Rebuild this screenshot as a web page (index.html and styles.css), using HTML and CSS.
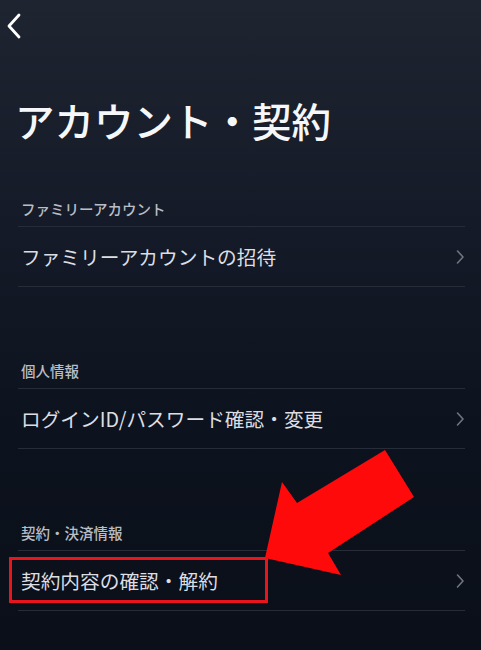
FILE: index.html
```html
<!DOCTYPE html>
<html lang="ja">
<head>
<meta charset="utf-8">
<title>アカウント・契約</title>
<link rel="stylesheet" href="styles.css">
</head>
<body>
<div class="page">
  <header class="topbar">
    <svg class="back" width="16" height="26" viewBox="0 0 16 26"><path d="M13 2 L3 13 L13 24" fill="none" stroke="#ffffff" stroke-width="2.8" stroke-linecap="round" stroke-linejoin="round"/></svg>
  </header>
  <h1 class="title">アカウント・契約</h1>

  <section class="group first">
    <h2 class="group-head">ファミリーアカウント</h2>
    <div class="row"><span class="row-label">ファミリーアカウントの招待</span><svg class="chev" width="10" height="16" viewBox="0 0 10 16"><path d="M2.5 2 L8 8 L2.5 14" fill="none" stroke="#70757e" stroke-width="1.6" stroke-linecap="round" stroke-linejoin="round"/></svg></div>
  </section>

  <section class="group">
    <h2 class="group-head">個人情報</h2>
    <div class="row"><span class="row-label">ログインID/パスワード確認・変更</span><svg class="chev" width="10" height="16" viewBox="0 0 10 16"><path d="M2.5 2 L8 8 L2.5 14" fill="none" stroke="#70757e" stroke-width="1.6" stroke-linecap="round" stroke-linejoin="round"/></svg></div>
  </section>

  <section class="group">
    <h2 class="group-head">契約・決済情報</h2>
    <div class="row"><span class="row-label">契約内容の確認・解約</span><svg class="chev" width="10" height="16" viewBox="0 0 10 16"><path d="M2.5 2 L8 8 L2.5 14" fill="none" stroke="#70757e" stroke-width="1.6" stroke-linecap="round" stroke-linejoin="round"/></svg></div>
  </section>

  <svg class="annotation" width="481" height="650" viewBox="0 0 481 650">
    <rect x="10.5" y="558.5" width="256" height="43" fill="none" stroke="#e8161c" stroke-width="3"/>
    <polygon points="385,450 414,497 328,553 341,575 265,558 282,482 297,503" fill="#ff0a0a"/>
  </svg>
</div>
</body>
</html>
```

FILE: styles.css
```css
* { box-sizing: border-box; }
html, body {
  margin: 0;
  padding: 0;
}
body {
  width: 481px;
  height: 650px;
  overflow: hidden;
  background: linear-gradient(180deg, #1f2431 0%, #141a27 35%, #0d131e 65%, #0a0f19 100%);
  font-family: "Noto Sans CJK JP", "Noto Sans", sans-serif;
  color: #e0e2e6;
}
.page {
  position: relative;
  height: 650px;
}
.topbar {
  height: 96px;
  padding: 13px 0 0 6px;
}
.back { display: block; }
.title {
  margin: 0;
  padding-left: 15px;
  font-size: 39.5px;
  line-height: 48px;
  font-weight: 500;
  color: #f5f7f9;
}
.group {
  margin: 74px 16px 0 18px;
}
.group.first { margin-top: 55px; }
.group-head {
  margin: 0;
  padding: 0 0 7px 3px;
  font-size: 14.5px;
  line-height: 20px;
  font-weight: 500;
  color: #b9bdc5;
  border-bottom: 1px solid #272d38;
}
.row {
  height: 60px;
  display: flex;
  align-items: center;
  justify-content: space-between;
  padding: 0 0 0 3px;
  border-bottom: 1px solid #272d38;
}
.row-label {
  font-size: 19.7px;
  line-height: 28px;
  color: #dcdee3;
}
.chev {
  display: block;
}
.annotation {
  position: absolute;
  left: 0;
  top: 0;
  pointer-events: none;
}
```
